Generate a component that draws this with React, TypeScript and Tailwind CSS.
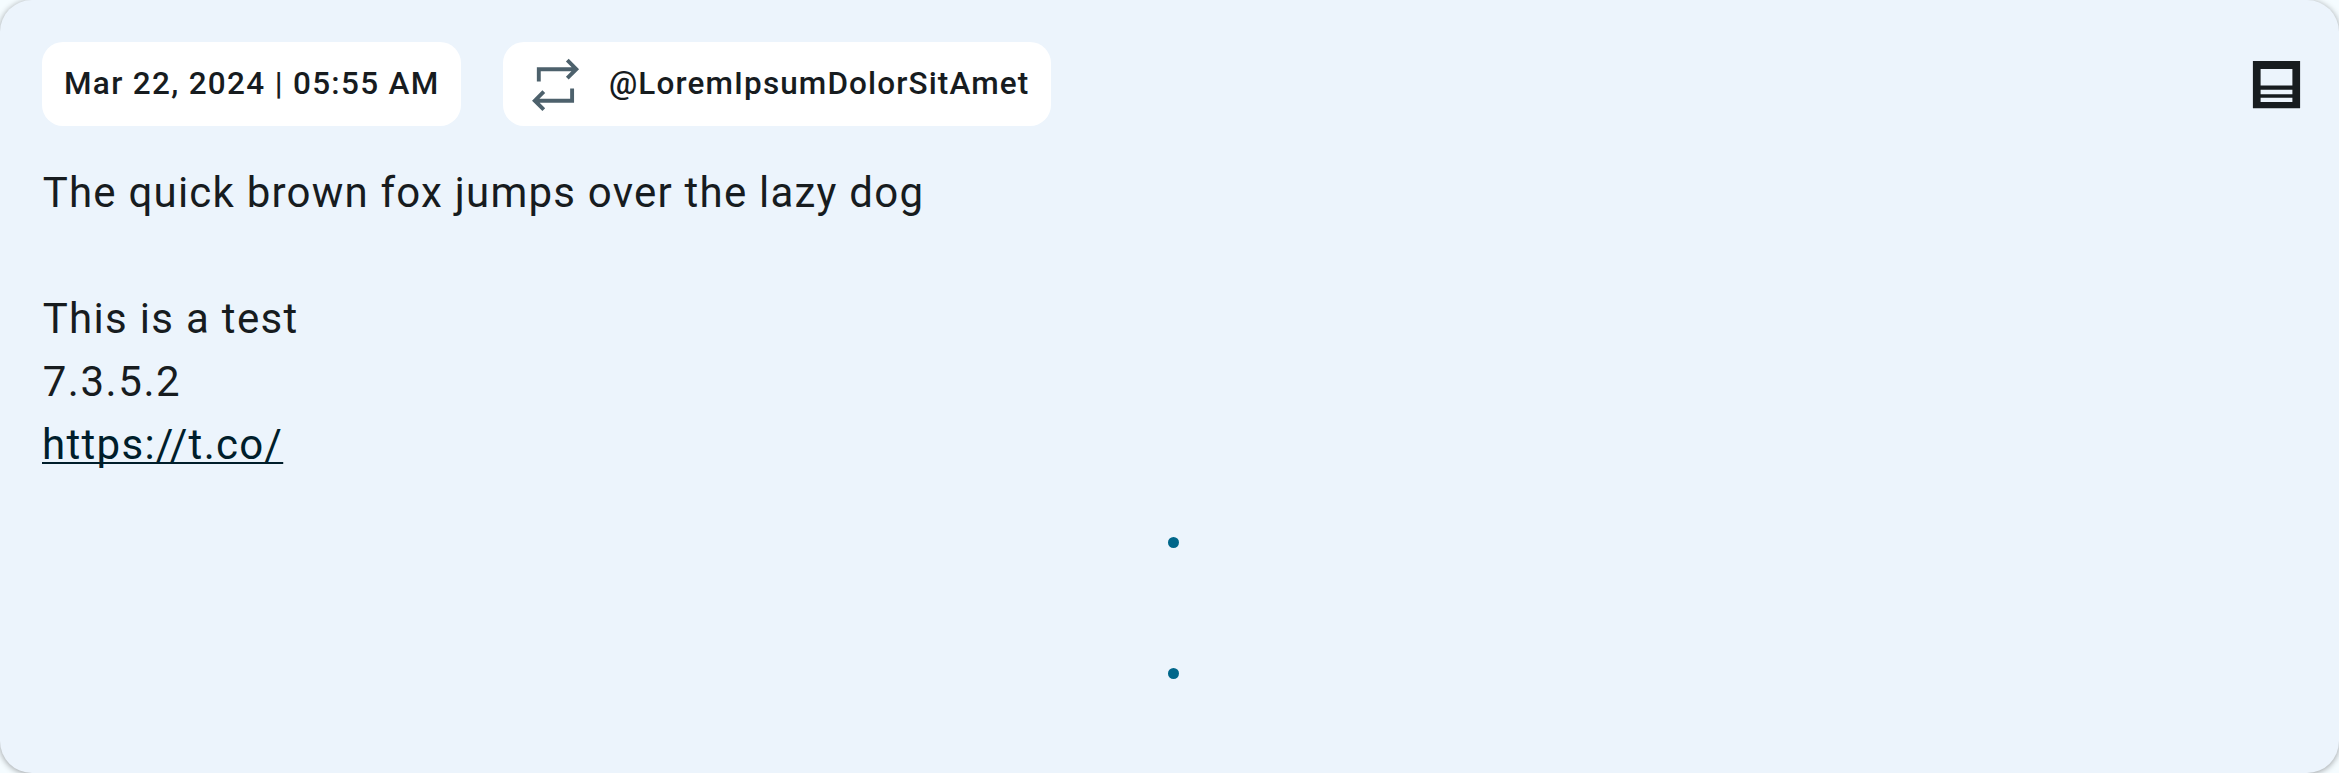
export default function App() {
  return (
    <div className="h-[773px] w-[2339px] overflow-hidden bg-[#f5fcff] font-[Roboto,sans-serif]">
      <article className="flex h-full w-full flex-col rounded-[32px] bg-[#ecf4fc] pt-[42px] pr-[31px] pl-[42px] text-[#171c1f] shadow-[0_1px_6px_rgba(0,0,0,0.38)]">
        <header className="flex h-[84px] items-center text-[31.5px] font-medium">
          <div className="mr-[42px] flex h-full w-[419px] items-center rounded-[21px] bg-white pb-[1px] pl-[22px] tracking-[1.31px] whitespace-nowrap">
            Mar 22, 2024 | 05:55 AM
          </div>
          <div className="flex h-full w-[548px] items-center rounded-[21px] bg-white pl-[21px] tracking-[1.12px] whitespace-nowrap">
            <svg className="mr-[22px] h-[63px] w-[63px]" viewBox="0 0 63 63" fill="none" stroke="#4d616c" strokeWidth="3.9">
              <path d="M14.8 28.5V16.2H52M43.3 7.2L52.3 16.2L43.3 25.2" />
              <path d="M48.1 35.5V47.7H11M19.8 38.7L10.8 47.7L19.8 56.7" />
            </svg>
            <span className="pb-[1px]">@LoremIpsumDolorSitAmet</span>
          </div>
          <svg className="ml-auto h-[63px] w-[63px]" viewBox="0 0 63 63" fill="#171c1f" fillRule="evenodd">
            <path d="M7.9 7.9H55.1V55.3H7.9ZM15.6 15.9V32.6H47.4V15.9ZM15.6 36.7V41.3H47.4V36.7ZM15.6 44.7V49.1H47.4V44.7Z" />
          </svg>
        </header>
        <div className="mt-[35px] text-[42px] leading-[63px] tracking-[1.31px]">
          <p className="pl-[0.7px] tracking-[1.22px]">The quick brown fox jumps over the lazy dog</p>
          <p>&nbsp;</p>
          <p className="pl-[0.7px]">This is a test</p>
          <p className="pl-[0.7px] tracking-[1.55px]">7.3.5.2</p>
          <p className="text-[#001e2b]">
            <a className="underline decoration-2 underline-offset-[3px] [text-decoration-skip-ink:none]">https://t.co/</a>
          </p>
        </div>
        <div className="mt-[61px] flex flex-col items-center gap-[120px] pr-[3px]">
          <span className="size-[11px] rounded-full bg-[#00668a]" />
          <span className="size-[11px] rounded-full bg-[#00668a]" />
        </div>
      </article>
    </div>
  );
}
